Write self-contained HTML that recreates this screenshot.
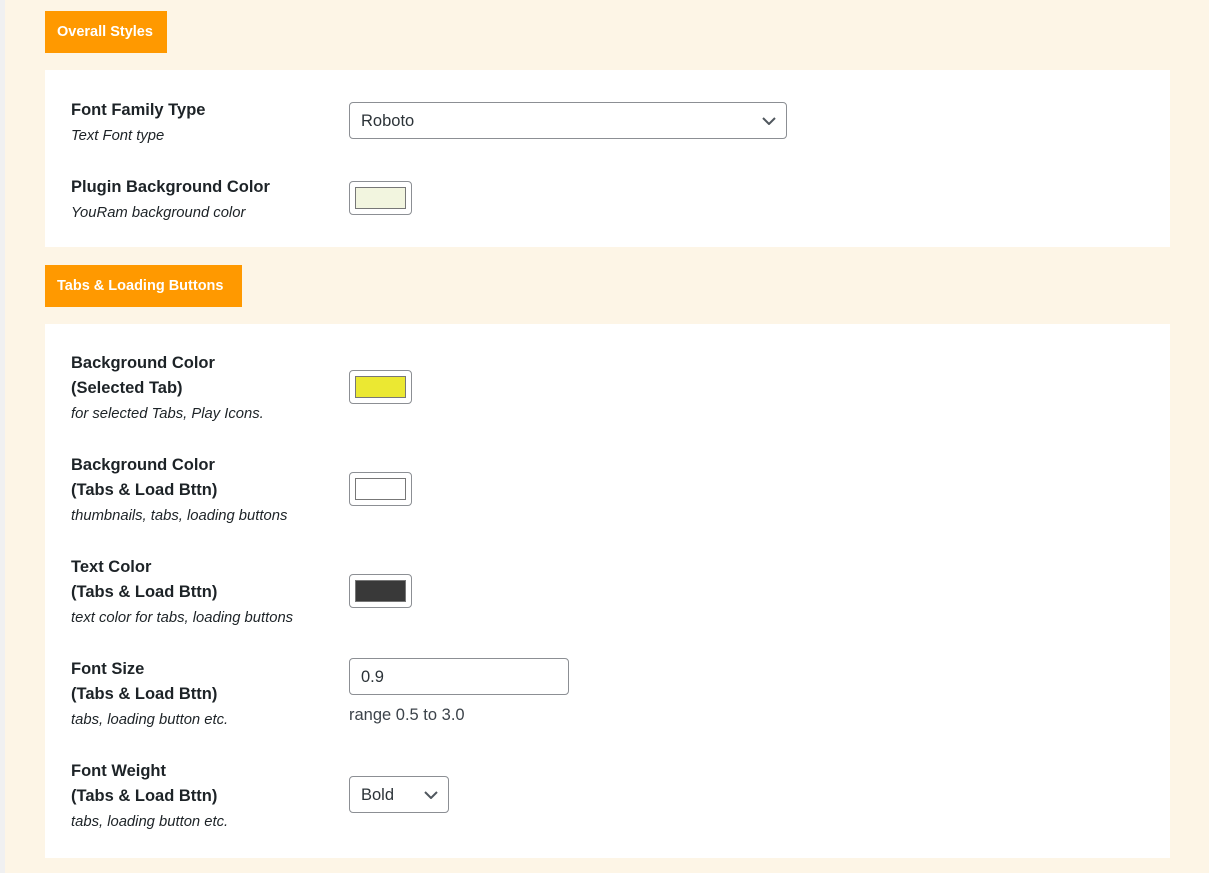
<!DOCTYPE html>
<html><head><meta charset="utf-8"><style>
*{margin:0;padding:0;box-sizing:border-box}
body{width:1209px;height:873px;background:#fdf5e6;position:relative;overflow:hidden;font-family:"Liberation Sans",sans-serif;color:#1d2327}
.strip{position:absolute;left:0;top:0;width:5px;height:873px;background:#f0f0f1}
.hd{position:absolute;left:45px;background:#ff9900;color:#fff;font-weight:bold;font-size:14.5px;line-height:42px;padding-left:12px;height:42px}
.panel{position:absolute;left:45px;width:1125px;background:#fff}
.lab{position:absolute;left:71px;font-size:16.5px;font-weight:bold;line-height:25px;color:#1d2327}
.lab i{display:block;font-weight:normal;font-size:14.8px;line-height:27px}
.sw{position:absolute;left:349px;width:63px;height:34px;border:1px solid #8c8f94;border-radius:4px;background:#fff}
.sw span{position:absolute;left:5px;top:5px;width:51px;height:22px;border:1px solid #777}
.sel{position:absolute;left:349px;border:1px solid #8c8f94;border-radius:4px;background:#fff;font-size:16.5px;color:#2c3338;padding-left:11px}
.sel svg{position:absolute;top:50%;margin-top:-4px}
</style></head><body>
<div class="strip"></div>
<div class="hd" style="top:11px;width:122px">Overall Styles</div>
<div class="panel" style="top:70px;height:177px"></div>
<div class="hd" style="top:265px;width:197px">Tabs &amp; Loading Buttons</div>
<div class="panel" style="top:324px;height:534px"></div>

<div class="lab" style="top:98px">Font Family Type<i>Text Font type</i></div>
<div class="sel" style="top:102px;width:438px;height:37px;line-height:37px">Roboto<svg style="right:10px" width="14" height="8" viewBox="0 0 14 8"><path d="M1 1l6 6 6-6" stroke="#50575e" stroke-width="2" fill="none"/></svg></div>

<div class="lab" style="top:175px">Plugin Background Color<i>YouRam background color</i></div>
<div class="sw" style="top:181px"><span style="background:#f2f5df"></span></div>

<div class="lab" style="top:351px">Background Color<br>(Selected Tab)<i>for selected Tabs, Play Icons.</i></div>
<div class="sw" style="top:370px"><span style="background:#ebe832"></span></div>

<div class="lab" style="top:453px">Background Color<br>(Tabs &amp; Load Bttn)<i>thumbnails, tabs, loading buttons</i></div>
<div class="sw" style="top:472px"><span style="background:#fff"></span></div>

<div class="lab" style="top:555px">Text Color<br>(Tabs &amp; Load Bttn)<i>text color for tabs, loading buttons</i></div>
<div class="sw" style="top:574px"><span style="background:#393939"></span></div>

<div class="lab" style="top:657px">Font Size<br>(Tabs &amp; Load Bttn)<i>tabs, loading button etc.</i></div>
<div class="sel" style="top:658px;width:220px;height:37px;line-height:37px">0.9</div>
<div style="position:absolute;left:349px;top:703px;font-size:16.5px;line-height:25px;color:#3c434a">range 0.5 to 3.0</div>

<div class="lab" style="top:759px">Font Weight<br>(Tabs &amp; Load Bttn)<i>tabs, loading button etc.</i></div>
<div class="sel" style="top:776px;width:100px;height:37px;line-height:37px">Bold<svg style="right:10px" width="14" height="8" viewBox="0 0 14 8"><path d="M1 1l6 6 6-6" stroke="#50575e" stroke-width="2" fill="none"/></svg></div>
</body></html>
